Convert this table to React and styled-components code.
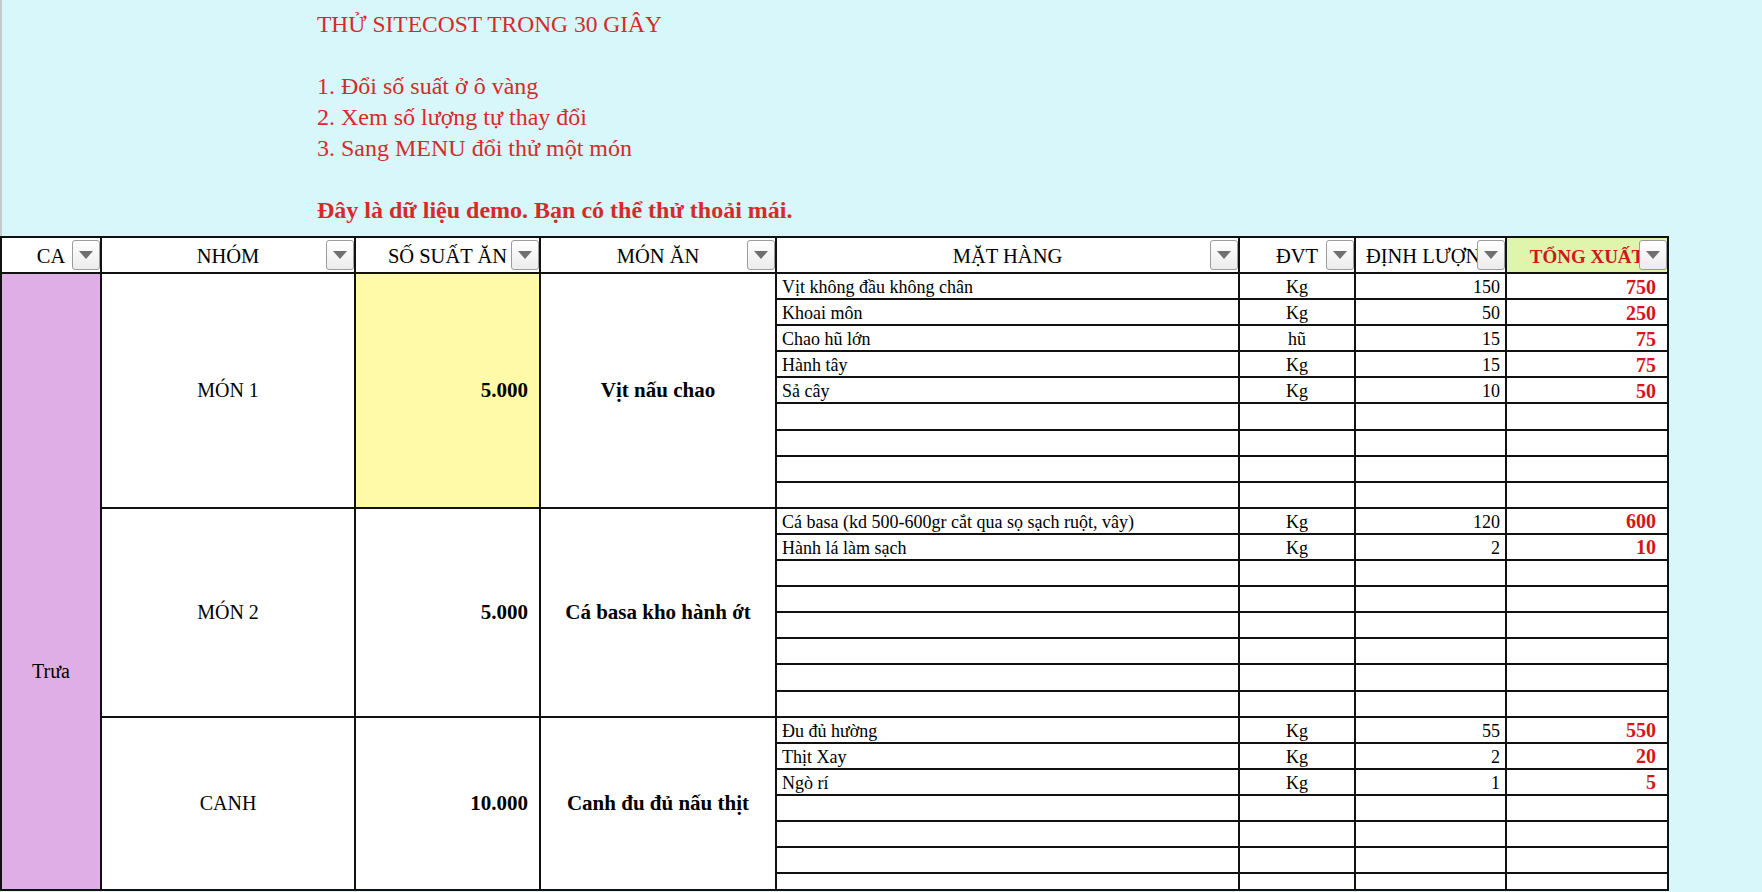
import React from 'react';
import styled, { createGlobalStyle } from 'styled-components';

const GlobalStyle = createGlobalStyle`
  html, body {
    margin: 0;
    padding: 0;
    height: 892px;
    overflow: hidden;
    background: #d8f7fb;
    font-family: 'Liberation Serif', 'Times New Roman', serif;
  }
`;

const Page = styled.div`
  width: 1762px;
  height: 892px;
  overflow: hidden;
`;

const Intro = styled.div`
  padding: 9px 0 0 315px;
  height: 236px;
  box-sizing: border-box;
  border-left: 2px solid #c3cccd;
  color: #d62a2a;
  font-size: 24px;
  line-height: 31px;
`;

const IntroLine = styled.div`
  height: 31px;
  white-space: nowrap;
  font-size: ${(p) => (p.title ? '23.5px' : 'inherit')};
  font-weight: ${(p) => (p.bold ? 700 : 400)};
`;

const Sheet = styled.div`
  display: grid;
  width: fit-content;
  grid-template-columns: 100px 254px 185px 236px 463px 116px 151px 162px;
  grid-template-rows: 36px repeat(23, 26.1px) 16.7px;
  border-top: 2px solid #111;
  border-left: 2px solid #111;
  background: #fff;
`;

const Cell = styled.div`
  box-sizing: border-box;
  border-right: 2px solid #111;
  border-bottom: 2px solid #111;
  display: flex;
  align-items: center;
  overflow: hidden;
  white-space: nowrap;
  color: #000;
`;

const HeadCell = styled(Cell)`
  position: relative;
  justify-content: center;
  padding-top: 3px;
  font-size: ${(p) => (p.accent ? '19px' : '20.5px')};
  font-weight: ${(p) => (p.accent ? 700 : 400)};
  color: ${(p) => (p.accent ? '#d4161b' : '#000')};
  background: ${(p) => (p.accent ? '#def5ab' : '#fff')};
`;

const FilterButton = styled.span`
  position: absolute;
  right: 0;
  top: 2px;
  width: 28px;
  height: 30px;
  box-sizing: border-box;
  border: 1px solid #9c9c9c;
  border-radius: 3px;
  background: linear-gradient(#ffffff, #ececec);
  display: flex;
  align-items: center;
  justify-content: center;
`;

const ShiftCell = styled(Cell)`
  grid-row: span ${(p) => p.span};
  background: #dfaee6;
  justify-content: center;
  padding-top: 180px;
  font-size: 20px;
`;

const GroupCell = styled(Cell)`
  grid-row: span ${(p) => p.span};
  justify-content: center;
  font-size: 20px;
`;

const QtyCell = styled(Cell)`
  grid-row: span ${(p) => p.span};
  justify-content: flex-end;
  padding-right: 11px;
  font-size: 21px;
  font-weight: 700;
  background: ${(p) => (p.highlight ? '#fffaa8' : '#fff')};
`;

const DishCell = styled(Cell)`
  grid-row: span ${(p) => p.span};
  justify-content: center;
  font-size: 21px;
  font-weight: 700;
`;

const ItemCell = styled(Cell)`
  font-size: 18px;
  padding: 3px 5px 0;
  justify-content: ${(p) =>
    p.align === 'right' ? 'flex-end' : p.align === 'center' ? 'center' : 'flex-start'};
`;

const TotalCell = styled(Cell)`
  justify-content: flex-end;
  padding: 2px 11px 0 0;
  font-size: 20px;
  font-weight: 700;
  color: #d4161b;
`;

const headers = [
  { label: 'CA' },
  { label: 'NHÓM' },
  { label: 'SỐ SUẤT ĂN' },
  { label: 'MÓN ĂN' },
  { label: 'MẶT HÀNG' },
  { label: 'ĐVT' },
  { label: 'ĐỊNH LƯỢNG' },
  { label: 'TỔNG XUẤT', accent: true },
];

const blocks = [
  {
    group: 'MÓN 1',
    qty: '5.000',
    dish: 'Vịt nấu chao',
    highlight: true,
    rows: 9,
    items: [
      ['Vịt không đầu không chân', 'Kg', '150', '750'],
      ['Khoai môn', 'Kg', '50', '250'],
      ['Chao hũ lớn', 'hũ', '15', '75'],
      ['Hành tây', 'Kg', '15', '75'],
      ['Sả cây', 'Kg', '10', '50'],
    ],
  },
  {
    group: 'MÓN 2',
    qty: '5.000',
    dish: 'Cá basa kho hành ớt',
    rows: 8,
    items: [
      ['Cá basa (kd 500-600gr cắt qua sọ sạch ruột, vây)', 'Kg', '120', '600'],
      ['Hành lá làm sạch', 'Kg', '2', '10'],
    ],
  },
  {
    group: 'CANH',
    qty: '10.000',
    dish: 'Canh đu đủ nấu thịt',
    rows: 7,
    items: [
      ['Đu đủ hường', 'Kg', '55', '550'],
      ['Thịt Xay', 'Kg', '2', '20'],
      ['Ngò rí', 'Kg', '1', '5'],
    ],
  },
];

const Arrow = () => (
  <svg width="14" height="8" viewBox="0 0 14 8">
    <polygon points="0,0 14,0 7,8" fill="#6f6f6f" />
  </svg>
);

export default function App() {
  const totalRows = blocks.reduce((n, b) => n + b.rows, 0);

  return (
    <Page>
      <GlobalStyle />
      <Intro>
        <IntroLine title>THỬ SITECOST TRONG 30 GIÂY</IntroLine>
        <IntroLine />
        <IntroLine>1. Đổi số suất ở ô vàng</IntroLine>
        <IntroLine>2. Xem số lượng tự thay đổi</IntroLine>
        <IntroLine>3. Sang MENU đổi thử một món</IntroLine>
        <IntroLine />
        <IntroLine bold>Đây là dữ liệu demo. Bạn có thể thử thoải mái.</IntroLine>
      </Intro>
      <Sheet>
        {headers.map((h) => (
          <HeadCell key={h.label} accent={h.accent}>
            {h.label}
            <FilterButton>
              <Arrow />
            </FilterButton>
          </HeadCell>
        ))}
        <ShiftCell span={totalRows}>Trưa</ShiftCell>
        {blocks.map((b) => (
          <React.Fragment key={b.group}>
            <GroupCell span={b.rows}>{b.group}</GroupCell>
            <QtyCell span={b.rows} highlight={b.highlight}>
              {b.qty}
            </QtyCell>
            <DishCell span={b.rows}>{b.dish}</DishCell>
            {Array.from({ length: b.rows }).map((_, i) => {
              const it = b.items[i] || ['', '', '', ''];
              return (
                <React.Fragment key={i}>
                  <ItemCell>{it[0]}</ItemCell>
                  <ItemCell align="center">{it[1]}</ItemCell>
                  <ItemCell align="right">{it[2]}</ItemCell>
                  <TotalCell>{it[3]}</TotalCell>
                </React.Fragment>
              );
            })}
          </React.Fragment>
        ))}
      </Sheet>
    </Page>
  );
}
